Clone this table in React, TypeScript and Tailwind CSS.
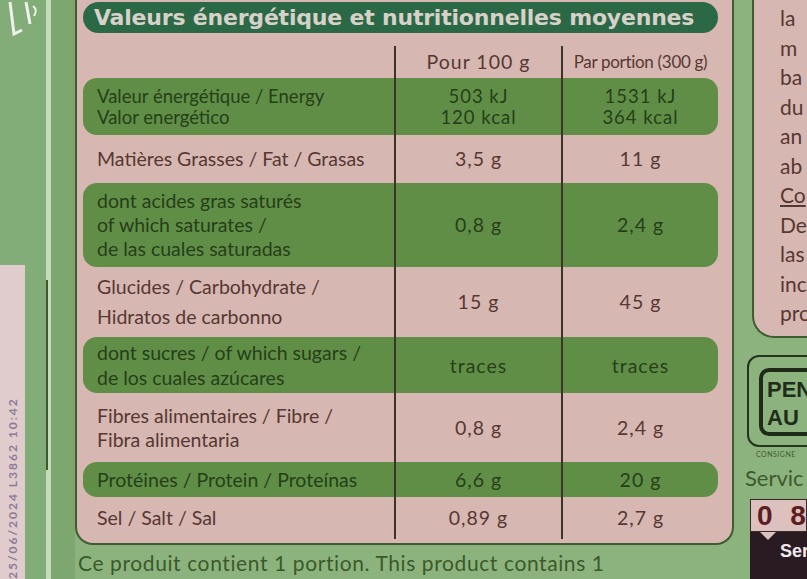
import React from "react";

type Row = {
  label: string[];
  v1: string[];
  v2: string[];
  green: boolean;
  h: string;
  lh: string;
  fs?: string;
};

const rows: Row[] = [
  { label: ["Valeur énergétique / Energy", "Valor energético"], v1: ["503 kJ", "120 kcal"], v2: ["1531 kJ", "364 kcal"], green: true, h: "h-[57px]", lh: "leading-[21px]", fs: "text-[18.5px]" },
  { label: ["Matières Grasses / Fat / Grasas"], v1: ["3,5 g"], v2: ["11 g"], green: false, h: "h-[48px]", lh: "leading-[24px]" },
  { label: ["dont acides gras saturés", "of which saturates /", "de las cuales saturadas"], v1: ["0,8 g"], v2: ["2,4 g"], green: true, h: "h-[84px]", lh: "leading-[24px]" },
  { label: ["Glucides / Carbohydrate /", "Hidratos de carbonno"], v1: ["15 g"], v2: ["45 g"], green: false, h: "h-[70px]", lh: "leading-[30px]" },
  { label: ["dont sucres / of which sugars /", "de los cuales azúcares"], v1: ["traces"], v2: ["traces"], green: true, h: "h-[56px]", lh: "leading-[25px]" },
  { label: ["Fibres alimentaires / Fibre /", "Fibra alimentaria"], v1: ["0,8 g"], v2: ["2,4 g"], green: false, h: "h-[69px]", lh: "leading-[24px]" },
  { label: ["Protéines / Protein / Proteínas"], v1: ["6,6 g"], v2: ["20 g"], green: true, h: "h-[35px]", lh: "leading-[24px]" },
  { label: ["Sel / Salt / Sal"], v1: ["0,89 g"], v2: ["2,7 g"], green: false, h: "h-[42px]", lh: "leading-[24px]" },
];

function TableRow({ r }: { r: Row }) {
  const txt = r.green ? "text-[#263f19]" : "text-[#573733]";
  const fs = r.fs ?? "text-[19.5px]";
  return (
    <div className={`flex ${r.h} ${r.green ? "bg-[#608e47] rounded-[14px]" : ""} ${txt}`}>
      <div className={`w-[311px] flex flex-col justify-center pl-[14px] ${fs} ${r.lh}`}>
        {r.label.map((l, i) => (
          <div key={i} className="whitespace-nowrap">{l}</div>
        ))}
      </div>
      <div className={`w-[167px] border-l-2 border-[#3b3427] flex flex-col justify-center items-center ${fs} ${r.lh}`}>
        {r.v1.map((l, i) => (
          <div key={i} className="whitespace-nowrap tracking-[1px]">{l}</div>
        ))}
      </div>
      <div className={`w-[157px] border-l-2 border-[#3b3427] flex flex-col justify-center items-center ${fs} ${r.lh}`}>
        {r.v2.map((l, i) => (
          <div key={i} className="whitespace-nowrap tracking-[1px]">{l}</div>
        ))}
      </div>
    </div>
  );
}

export default function App() {
  const rightWords = ["la", "m", "ba", "du", "an", "ab", "Co", "De", "las", "inc", "pro"];
  return (
    <div className="w-[807px] h-[579px] overflow-hidden bg-[#8cb37e] flex font-['Lato',sans-serif]">
      {/* left strip */}
      <div className="w-[75px] shrink-0 flex h-full">
        <div className="w-[46px] flex flex-col bg-[#82ad78]">
          <div className="h-[265px] shrink-0">
            <svg width="46" height="60" viewBox="0 0 46 60">
              <path d="M10 2 L14 34 L22 30" stroke="#eef2ea" strokeWidth="3" fill="none" />
              <path d="M26 2 L30 24" stroke="#eef2ea" strokeWidth="3" fill="none" />
              <path d="M33 6 Q38 10 34 16" stroke="#eef2ea" strokeWidth="2" fill="none" />
            </svg>
          </div>
          <div className="flex-1 w-[25px] bg-[#e0cccc] overflow-hidden flex justify-center pt-[40px]">
            <div className="[writing-mode:vertical-rl] rotate-180 text-[12px] font-bold tracking-[2px] text-[#8a7b99] whitespace-nowrap">
              25/06/2024 L3862 10:42
            </div>
          </div>
        </div>
        <div className="w-[5px] bg-[#c4dbbd] flex flex-col">
          <div className="h-[280px]" />
          <div className="h-[190px] w-[2px] bg-[#3f5a33]" />
        </div>
        <div className="flex-1 bg-[#7ea770]" />
      </div>

      {/* main panel */}
      <div className="w-[659px] shrink-0 flex flex-col">
        <div className="h-[545px] shrink-0 bg-[#d6b7b1] border-x-2 border-b-2 border-[#3f5d30] rounded-b-[18px] pl-[6px] pr-[14px] pt-[2px] flex flex-col">
          <div className="h-[31px] rounded-full bg-[#2b6946] flex items-center pl-[11px] text-[22px] font-bold text-[#d8d1ca] font-['DejaVu_Sans',sans-serif] tracking-[-0.2px] whitespace-nowrap">
            Valeurs énergétique et nutritionnelles moyennes
          </div>
          <div className="mt-[13px] h-[32px] flex text-[#573733]">
            <div className="w-[311px]" />
            <div className="w-[167px] border-l-2 border-[#3b3427] flex items-center justify-center text-[19.5px] tracking-[1px]">
              Pour 100 g
            </div>
            <div className="w-[157px] border-l-2 border-[#3b3427] flex items-center justify-center text-[17px] tracking-[-0.3px] whitespace-nowrap">
              Par portion (300 g)
            </div>
          </div>
          {rows.map((r, i) => (
            <TableRow key={i} r={r} />
          ))}
        </div>
        <div className="pl-[3px] pt-[4px] text-[21px] leading-[28px] tracking-[0.6px] text-[#3b5a2a] whitespace-nowrap">
          Ce produit contient 1 portion. This product contains 1
        </div>
      </div>

      {/* gap stripe */}
      <div className="w-[11px] shrink-0" />

      {/* right column */}
      <div className="flex-1 flex flex-col overflow-hidden">
        <div className="ml-[7px] h-[338px] shrink-0 bg-[#d6b7b1] border-l-2 border-b-2 border-[#3f5d30] rounded-bl-[22px] pl-[26px] pt-[3px] text-[21px] leading-[29.5px] text-[#573733] overflow-hidden">
          {rightWords.map((w, i) => (
            <div key={i} className={`whitespace-nowrap ${w === "Co" ? "underline" : ""}`}>{w}</div>
          ))}
        </div>
        <div className="ml-[2px] mt-[17px] h-[92px] w-[80px] shrink-0 border-2 border-[#26331f] rounded-[12px] pl-[10px] pt-[11px]">
          <div className="h-[68px] border-[4px] border-[#1f2b18] rounded-[10px] pl-[4px] pt-[4px] text-[22px] leading-[28px] font-bold text-[#1f2d1a] font-['Liberation_Sans',sans-serif]">
            <div>PEN</div>
            <div>AU</div>
          </div>
        </div>
        <div className="ml-[11px] mt-[2px] text-[7px] leading-[10px] text-[#3f5a30] tracking-[0.5px] whitespace-nowrap">CONSIGNE</div>
        <div className="mt-[6px] text-[22px] leading-[26px] text-[#3d5a2e] whitespace-nowrap">Servic</div>
        <div className="ml-[5px] mt-[8px] h-[33px] shrink-0 bg-[#dcc1be] border border-[#3a2a2a] pl-[6px] text-[28px] leading-[32px] font-bold text-[#5c1e22] font-['Liberation_Sans',sans-serif] tracking-[5px] whitespace-nowrap">
          0 8
        </div>
        <div className="ml-[5px] flex-1 bg-[#2a1b22] relative pl-[30px] pt-[6px] text-[18px] font-bold text-[#f0e8ee] font-['Liberation_Sans',sans-serif] whitespace-nowrap">
          <div className="absolute left-[10px] top-0 w-0 h-0 border-l-[8px] border-r-[8px] border-t-[8px] border-l-transparent border-r-transparent border-t-[#dcc1be]" />
          Ser
        </div>
      </div>
    </div>
  );
}
